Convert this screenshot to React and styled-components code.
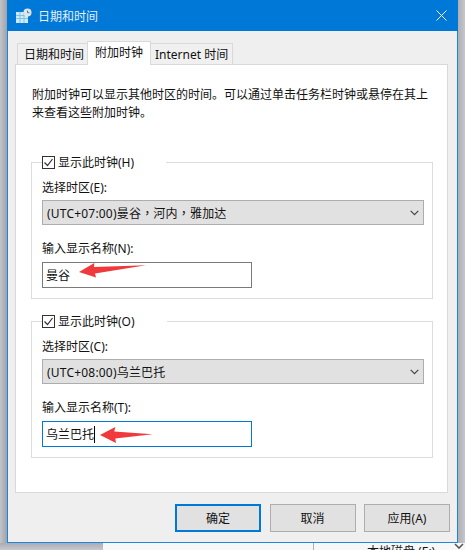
import styled, { createGlobalStyle } from "styled-components";

const Global = createGlobalStyle`
  html, body {
    margin: 0;
    width: 465px;
    height: 550px;
    overflow: hidden;
    background: #b4b6bd;
  }
  * { box-sizing: border-box; }
`;

const App = () => {
  return (
    <Page>
      <Global />
      <Top>
        <Shade />
        <Window>
          <TitleBar>
            <AppIcon />
            <Title>日期和时间</Title>
            <Close />
          </TitleBar>
          <Body>
            <Tabs>
              <Tab pad="0 3px 0 6px">日期和时间</Tab>
              <Tab active pad="0 7px 3px">附加时钟</Tab>
              <Tab pad="0 4px 0 4px">Internet 时间</Tab>
            </Tabs>
            <Panel>
              <Intro>
                附加时钟可以显示其他时区的时间。可以通过单击任务栏时钟或悬停在其上
                <br />
                来查看这些附加时钟。
              </Intro>
              <ClockGroup
                check="显示此时钟(H)"
                zoneLabel="选择时区(E):"
                zone={
                  <>
                    (UTC+07:00)曼谷<Comma>，</Comma>河内<Comma>，</Comma>雅加达
                  </>
                }
                nameLabel="输入显示名称(N):"
                name="曼谷"
              />
              <ClockGroup
                second
                check="显示此时钟(O)"
                zoneLabel="选择时区(C):"
                zone="(UTC+08:00)乌兰巴托"
                nameLabel="输入显示名称(T):"
                name="乌兰巴托"
                focused
              />
            </Panel>
            <Footer>
              <Button primary>确定</Button>
              <Button>取消</Button>
              <Button>应用(A)</Button>
            </Footer>
          </Body>
        </Window>
        <Shade right />
      </Top>
      <Bottom>
        <BottomShade />
        <Behind>
          <BehindText>本地磁盘 (E:)</BehindText>
        </Behind>
        <Chevron viewBox="0 0 10 6">
          <path d="M1 1l4 4 4-4" fill="none" stroke="#555" strokeWidth="1.6" />
        </Chevron>
      </Bottom>
    </Page>
  );
};

const ClockGroup = ({ second, check, zoneLabel, zone, nameLabel, name, focused }) => (
  <Group second={second}>
    <Legend>
      <CheckBox />
      {check}
    </Legend>
    <FieldLabel>{zoneLabel}</FieldLabel>
    <Select>
      <span>{zone}</span>
      <SelectArrow />
    </Select>
    <NameLabel>{nameLabel}</NameLabel>
    <NameInput $focused={focused}>
      {name}
      {focused && <Caret />}
      <RedArrow $focused={focused} />
    </NameInput>
  </Group>
);

const AppIcon = () => (
  <IconSvg viewBox="0 0 16 16">
    <rect x="0" y="4" width="12" height="11" fill="#cfe9f6" />
    <path d="M0 7.5h12M0 10.5h12M4 4v11M8 4v11" stroke="#7cc3e4" strokeWidth="1" />
    <circle cx="11.5" cy="4.5" r="4" fill="#dfe6ea" />
    <path d="M11.5 2.5v2.2h2" fill="none" stroke="#6a7a84" strokeWidth="1" />
  </IconSvg>
);

const Close = () => (
  <CloseSvg viewBox="0 0 11 11">
    <path d="M.5.5l10 10M10.5.5l-10 10" stroke="#fff" strokeWidth="1" />
  </CloseSvg>
);

const CheckBox = () => (
  <CheckSvg viewBox="0 0 13 13">
    <rect x=".5" y=".5" width="12" height="12" fill="#fff" stroke="#333" />
    <path d="M2.5 6.5l3 3 5-6.5" fill="none" stroke="#333" strokeWidth="1.2" />
  </CheckSvg>
);

const SelectArrow = () => (
  <ArrowSvg viewBox="0 0 9 6">
    <path d="M.7.8l3.8 3.8L8.3.8" fill="none" stroke="#444" strokeWidth="1.2" />
  </ArrowSvg>
);

const RedArrow = ({ $focused }) =>
  $focused ? (
    <FocusArrow viewBox="0 0 53 16">
      <path d="M0 8L15.3 0l-1 4.6 38.3 2.7-37.3 4.3.7 4.4z" fill="#f0393c" />
    </FocusArrow>
  ) : (
    <PlainArrow viewBox="0 0 67 15">
      <path d="M0 9L15.3 0 15 4l52-1.7-51 8.3 1 4z" fill="#f0393c" />
    </PlainArrow>
  );

const font = `"Noto Sans", "Noto Sans CJK SC", "Liberation Sans", sans-serif`;

const Page = styled.div`
  width: 465px;
  height: 550px;
  display: flex;
  flex-direction: column;
  font-family: ${font};
  font-size: 12px;
  color: #111;
  background: #b4b6bd;
`;

const Top = styled.div`
  display: flex;
  height: 543px;
`;

const Shade = styled.div`
  width: 7px;
  background: ${(p) =>
    p.right
      ? "linear-gradient(to right, #aeb0b7, #c4c6cb)"
      : "linear-gradient(to right, #c2c4ca, #9fa2aa)"};
`;

const Window = styled.div`
  width: 451px;
  display: flex;
  flex-direction: column;
  border: solid #1a86de;
  border-width: 0 1px 1px;
  background: #efefef;
`;

const TitleBar = styled.div`
  height: 31px;
  flex: none;
  display: flex;
  align-items: center;
  padding: 0 8px 0 9px;
  margin: 0 -1px;
  background: #0078d7;
  color: #fff;
`;

const IconSvg = styled.svg`
  width: 16px;
  height: 16px;
  margin-right: 6px;
`;

const Title = styled.div`
  flex: 1;
  font-size: 12px;
  color: #e3eff9;
`;

const CloseSvg = styled.svg`
  width: 11px;
  height: 11px;
  margin-right: 3px;
`;

const Body = styled.div`
  flex: 1;
  display: flex;
  flex-direction: column;
  padding: 10px 9px 0 7px;
`;

const Tabs = styled.div`
  display: flex;
  align-items: flex-end;
  height: 24px;
  padding-left: 2px;
  position: relative;
  z-index: 1;
  margin-bottom: -1px;
`;

const Tab = styled.div`
  height: ${(p) => (p.active ? "24px" : "22px")};
  padding: ${(p) => p.pad};
  display: flex;
  align-items: center;
  white-space: nowrap;
  border: 1px solid #d9d9d9;
  border-bottom: ${(p) => (p.active ? "none" : "1px solid #d9d9d9")};
  margin: ${(p) => (p.active ? "0 -1px" : "0")};
  position: relative;
  z-index: ${(p) => (p.active ? 1 : 0)};
  background: ${(p) => (p.active ? "#fff" : "#f0f0f0")};
`;

const Panel = styled.div`
  height: 429px;
  flex: none;
  background: #fff;
  border: 1px solid #d9d9d9;
  padding: 21px 14px 0 15px;
`;

const Intro = styled.div`
  line-height: 18px;
  padding-left: 1px;
  white-space: nowrap;
`;

const Group = styled.fieldset`
  margin: ${(p) => (p.second ? "13px" : "31px")} 0 0;
  padding: 0 8px 0 10px;
  height: 146px;
  border: 1px solid #dcdcdc;
  min-width: 0;
`;

const Legend = styled.legend`
  display: flex;
  align-items: center;
  height: 18px;
  padding: 0 32px 0 0;
  gap: 3px;
`;

const CheckSvg = styled.svg`
  width: 13px;
  height: 13px;
`;

const FieldLabel = styled.div`
  height: 18px;
  line-height: 18px;
  margin-top: 8px;
`;

const NameLabel = styled(FieldLabel)`
  margin-top: 15px;
`;

const Select = styled.div`
  height: 25px;
  margin-top: 3px;
  padding: 0 4px 0 4px;
  display: flex;
  align-items: center;
  justify-content: space-between;
  letter-spacing: 0.2px;
  background: #e1e1e1;
  border: 1px solid #adadad;
`;

const Comma = styled.span`
  font-family: "Noto Sans CJK TC", sans-serif;
`;

const ArrowSvg = styled.svg`
  width: 9px;
  height: 6px;
`;

const NameInput = styled.div`
  position: relative;
  width: 210px;
  height: 26px;
  margin-top: 4px;
  padding: 0 3px;
  display: flex;
  align-items: center;
  background: #fff;
  border: 1px solid ${(p) => (p.$focused ? "#0078d7" : "#7a7a7a")};
`;

const Caret = styled.span`
  width: 1px;
  height: 17px;
  background: #000;
`;

const PlainArrow = styled.svg`
  position: absolute;
  left: 36px;
  top: 0;
  width: 67px;
  height: 15px;
`;

const FocusArrow = styled.svg`
  position: absolute;
  left: 57px;
  top: 5px;
  width: 53px;
  height: 16px;
`;

const Footer = styled.div`
  display: flex;
  justify-content: flex-end;
  gap: 8.5px;
  margin: 11px -2px 0 0;
`;

const Button = styled.div`
  width: 86px;
  height: 28px;
  display: flex;
  align-items: center;
  justify-content: center;
  background: #e1e1e1;
  border: ${(p) => (p.primary ? "2px solid #0078d7" : "1px solid #adadad")};
`;

const Bottom = styled.div`
  height: 7px;
  display: flex;
  position: relative;
  overflow: hidden;
`;

const BottomShade = styled.div`
  width: 103px;
  background: linear-gradient(to bottom, #a9acb4, #c6c8cd);
`;

const Behind = styled.div`
  flex: 1;
  background: #f7f7f7;
  padding-left: 264px;
  height: 7px;
  position: relative;
  &::before {
    content: "";
    position: absolute;
    left: 210px;
    top: 0;
    width: 1px;
    height: 7px;
    background: #b0b0b0;
  }
`;

const BehindText = styled.div`
  white-space: nowrap;
  line-height: 18px;
  font-size: 12px;
`;

const Chevron = styled.svg`
  position: absolute;
  right: 1px;
  top: 0;
  width: 10px;
  height: 6px;
`;

export default App;
